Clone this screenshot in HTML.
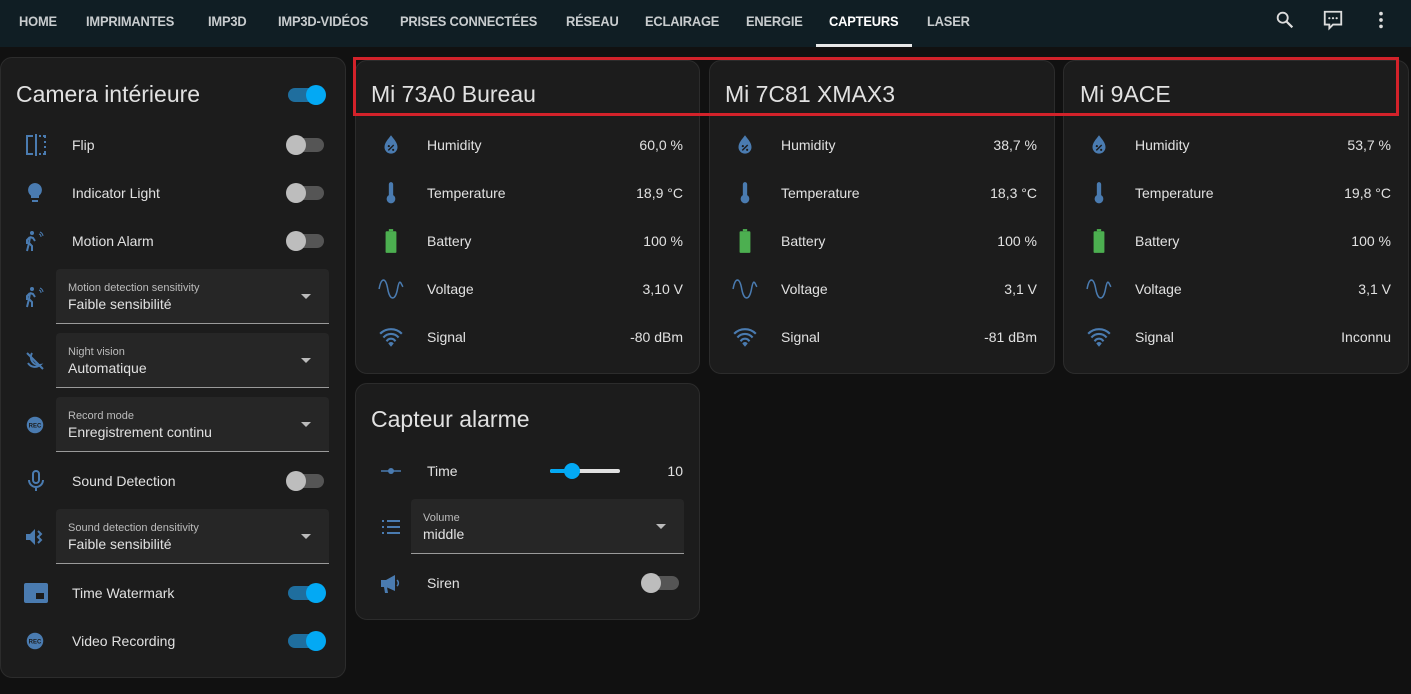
<!DOCTYPE html><html><head><meta charset="utf-8"><style>
*{box-sizing:border-box;margin:0;padding:0}
body{width:1411px;height:694px;background:#111111;font-family:"Liberation Sans",sans-serif;color:#e1e1e1;position:relative;overflow:hidden}
.hdr{position:absolute;left:0;top:0;width:1411px;height:47px;background:#101e24}
.tab{position:absolute;top:13px;font-size:14px;font-weight:bold;color:#c8ccce;letter-spacing:-0.2px;transform:scaleX(0.92);transform-origin:left;white-space:nowrap}
.card{position:absolute;background:#1c1c1c;border:1px solid #2c2c2c;border-radius:12px}
.t{position:absolute;font-size:23px;color:#e1e1e1;top:81px}
.lbl{position:absolute;font-size:14px;color:#e1e1e1}
.val{position:absolute;font-size:14px;color:#e1e1e1;text-align:right}
.ic{position:absolute}
.sw{position:absolute;width:36px;height:14px;border-radius:7px;background:#555}
.sw::after{content:"";position:absolute;top:-3px;left:-2px;width:20px;height:20px;border-radius:50%;background:#bdbdbd}
.sw.on{background:#1f6e9e}
.sw.on::after{left:18px;background:#03a9f4}
.sel{position:absolute;background:#262626;border-bottom:1px solid #9a9a9a;border-radius:4px 4px 0 0}
.sel .s{position:absolute;left:12px;top:13px;font-size:11px;color:#bbb}
.sel .v{position:absolute;left:12px;top:27px;font-size:14px;color:#e1e1e1}
.sel .a{position:absolute;right:18px;top:25px;width:0;height:0;border-left:5px solid transparent;border-right:5px solid transparent;border-top:5px solid #bbb}
</style></head><body>
<div class="hdr">
<span class="tab" style="left:19px">HOME</span>
<span class="tab" style="left:86px">IMPRIMANTES</span>
<span class="tab" style="left:208px">IMP3D</span>
<span class="tab" style="left:278px">IMP3D-VIDÉOS</span>
<span class="tab" style="left:400px">PRISES CONNECTÉES</span>
<span class="tab" style="left:566px">RÉSEAU</span>
<span class="tab" style="left:645px">ECLAIRAGE</span>
<span class="tab" style="left:746px">ENERGIE</span>
<span class="tab" style="left:829px;color:#fff">CAPTEURS</span>
<span class="tab" style="left:927px">LASER</span>
<div style="position:absolute;left:816px;top:44px;width:96px;height:3px;background:#e8e8e8"></div>
<svg class="ic" style="left:1274px;top:9px" width="22" height="22" viewBox="0 0 24 24"><circle cx="9.5" cy="9.5" r="5.5" fill="none" stroke="#ddd" stroke-width="2"/><path d="M13.5 13.5L20 20" stroke="#ddd" stroke-width="2.4"/></svg>
<svg class="ic" style="left:1322px;top:9px" width="22" height="22" viewBox="0 0 24 24"><path d="M3 3h18v14h-9l-4 4v-4H3z" fill="none" stroke="#ddd" stroke-width="2"/><circle cx="8" cy="10" r="1.2" fill="#ddd"/><circle cx="12" cy="10" r="1.2" fill="#ddd"/><circle cx="16" cy="10" r="1.2" fill="#ddd"/></svg>
<svg class="ic" style="left:1370px;top:9px" width="22" height="22" viewBox="0 0 24 24"><circle cx="12" cy="5" r="2" fill="#ddd"/><circle cx="12" cy="12" r="2" fill="#ddd"/><circle cx="12" cy="19" r="2" fill="#ddd"/></svg>
</div>

<div class="card" style="left:0;top:57px;width:346px;height:621px"></div>
<div class="t" style="left:16px">Camera intérieure</div>
<div class="sw on" style="left:288px;top:88px"></div>
<svg class="ic" style="left:24px;top:133px" width="24" height="24" viewBox="0 0 24 24"><path d="M9 3H3v18h6" fill="none" stroke="#4a7bb0" stroke-width="2"/><path d="M12 1v22" stroke="#4a7bb0" stroke-width="2"/><path d="M15 3h2M19 3h2v2M21 8v2M21 13v2M21 18v3h-2M17 21h-2" stroke="#4a7bb0" stroke-width="2"/></svg>
<div class="lbl" style="left:72px;top:137px">Flip</div><div class="sw" style="left:288px;top:138px"></div>
<svg class="ic" style="left:23px;top:181px" width="24" height="24" viewBox="0 0 24 24"><path d="M12 2a7 7 0 0 0-4 12.7V17h8v-2.3A7 7 0 0 0 12 2zM9 19h6v2H9z" fill="#4a7bb0"/></svg>
<div class="lbl" style="left:72px;top:185px">Indicator Light</div><div class="sw" style="left:288px;top:186px"></div>
<svg class="ic" style="left:23px;top:229px" width="24" height="24" viewBox="0 0 24 24"><circle cx="9" cy="4" r="2" fill="#4a7bb0"/><path d="M7 8l-3 3v4M7 8l3 1 2 3M7 8l-1 6 3 3v5M6 14l-2 8" stroke="#4a7bb0" stroke-width="2" fill="none"/><path d="M17 3a5 5 0 0 1 3 4M16 5a3 3 0 0 1 2 3" stroke="#4a7bb0" fill="none"/></svg>
<div class="lbl" style="left:72px;top:233px">Motion Alarm</div><div class="sw" style="left:288px;top:234px"></div>
<svg class="ic" style="left:23px;top:285px" width="24" height="24" viewBox="0 0 24 24"><circle cx="9" cy="4" r="2" fill="#4a7bb0"/><path d="M7 8l-3 3v4M7 8l3 1 2 3M7 8l-1 6 3 3v5M6 14l-2 8" stroke="#4a7bb0" stroke-width="2" fill="none"/><path d="M17 3a5 5 0 0 1 3 4M16 5a3 3 0 0 1 2 3" stroke="#4a7bb0" fill="none"/></svg>
<div class="sel" style="left:56px;top:269px;width:273px;height:55px"><div class="s">Motion detection sensitivity</div><div class="v">Faible sensibilité</div><div class="a"></div></div>
<svg class="ic" style="left:23px;top:349px" width="24" height="24" viewBox="0 0 24 24"><path d="M4 4l16 16" stroke="#4a7bb0" stroke-width="2"/><path d="M9 4a8 8 0 0 0 8 12 8 8 0 0 1-12-2" fill="none" stroke="#4a7bb0" stroke-width="2"/></svg>
<div class="sel" style="left:56px;top:333px;width:273px;height:55px"><div class="s">Night vision</div><div class="v">Automatique</div><div class="a"></div></div>
<svg class="ic" style="left:26px;top:416px" width="18" height="18" viewBox="0 0 24 24"><circle cx="12" cy="12" r="11" fill="#4a7bb0"/><text x="12" y="15" font-size="8" text-anchor="middle" fill="#1c1c1c" font-family="Liberation Sans" font-weight="bold">REC</text></svg>
<div class="sel" style="left:56px;top:397px;width:273px;height:55px"><div class="s">Record mode</div><div class="v">Enregistrement continu</div><div class="a"></div></div>
<svg class="ic" style="left:24px;top:469px" width="24" height="24" viewBox="0 0 24 24"><rect x="9" y="2" width="6" height="12" rx="3" fill="none" stroke="#4a7bb0" stroke-width="2"/><path d="M5 11a7 7 0 0 0 14 0M12 18v4" fill="none" stroke="#4a7bb0" stroke-width="2"/></svg>
<div class="lbl" style="left:72px;top:473px">Sound Detection</div><div class="sw" style="left:288px;top:474px"></div>
<svg class="ic" style="left:23px;top:525px" width="24" height="24" viewBox="0 0 24 24"><path d="M3 9h4l5-5v16l-5-5H3z" fill="#4a7bb0"/><path d="M15 6l3 3-3 3 3 3-3 3" fill="none" stroke="#4a7bb0" stroke-width="2"/></svg>
<div class="sel" style="left:56px;top:509px;width:273px;height:55px"><div class="s">Sound detection densitivity</div><div class="v">Faible sensibilité</div><div class="a"></div></div>
<svg class="ic" style="left:24px;top:583px" width="24" height="20" viewBox="0 0 24 20"><rect x="0" y="0" width="24" height="20" rx="2" fill="#4a7bb0"/><rect x="12" y="10" width="8" height="6" fill="#1c1c1c"/></svg>
<div class="lbl" style="left:72px;top:585px">Time Watermark</div><div class="sw on" style="left:288px;top:586px"></div>
<svg class="ic" style="left:26px;top:632px" width="18" height="18" viewBox="0 0 24 24"><circle cx="12" cy="12" r="11" fill="#4a7bb0"/><text x="12" y="15" font-size="8" text-anchor="middle" fill="#1c1c1c" font-family="Liberation Sans" font-weight="bold">REC</text></svg>
<div class="lbl" style="left:72px;top:633px">Video Recording</div><div class="sw on" style="left:288px;top:634px"></div>

<div class="card" style="left:355px;top:60px;width:345px;height:314px"></div>
<div class="card" style="left:709px;top:60px;width:346px;height:314px"></div>
<div class="card" style="left:1063px;top:60px;width:346px;height:314px"></div>

<div class="t" style="left:371px">Mi 73A0 Bureau</div>
<div class="t" style="left:725px">Mi 7C81 XMAX3</div>
<div class="t" style="left:1080px">Mi 9ACE</div>

<div id="rows"></div>

<div style="position:absolute;left:353px;top:57px;width:1046px;height:59px;border:3px solid #d3222a"></div>

<div class="card" style="left:355px;top:383px;width:345px;height:237px"></div>
<div class="t" style="left:371px;top:406px">Capteur alarme</div>
<svg class="ic" style="left:379px;top:462px" width="24" height="18" viewBox="0 0 24 18"><path d="M2 9h20" stroke="#4a7bb0" stroke-width="1.5"/><circle cx="12" cy="9" r="3" fill="#4a7bb0"/></svg>
<div class="lbl" style="left:427px;top:463px">Time</div>
<div style="position:absolute;left:550px;top:469px;width:70px;height:4px;background:#e0e0e0;border-radius:2px"></div>
<div style="position:absolute;left:550px;top:469px;width:22px;height:4px;background:#03a9f4;border-radius:2px"></div>
<div style="position:absolute;left:564px;top:463px;width:16px;height:16px;background:#03a9f4;border-radius:50%"></div>
<div class="val" style="left:640px;top:463px;width:43px">10</div>
<svg class="ic" style="left:379px;top:516px" width="24" height="24" viewBox="0 0 24 24"><path d="M3 5h2M3 11h2M3 17h2M8 5h13M8 11h13M8 17h13" stroke="#4a7bb0" stroke-width="2"/></svg>
<div class="sel" style="left:411px;top:499px;width:273px;height:55px"><div class="s">Volume</div><div class="v">middle</div><div class="a"></div></div>
<svg class="ic" style="left:379px;top:572px" width="24" height="24" viewBox="0 0 24 24"><path d="M2 8h5l9-5v16l-9-4H2z M5 15h3l1 6H6z" fill="#4a7bb0"/><path d="M18 8a4 4 0 0 1 0 6" stroke="#4a7bb0" stroke-width="1.5" fill="none"/></svg>
<div class="lbl" style="left:427px;top:575px">Siren</div><div class="sw" style="left:643px;top:576px"></div>

<script>
var data=[[355,["60,0 %","18,9 °C","100 %","3,10 V","-80 dBm"]],[709,["38,7 %","18,3 °C","100 %","3,1 V","-81 dBm"]],[1063,["53,7 %","19,8 °C","100 %","3,1 V","Inconnu"]]];
var names=["Humidity","Temperature","Battery","Voltage","Signal"];
var icons=[
'<path d="M12 3C9 7 6 10 6 14a6 6 0 0 0 12 0c0-4-3-7-6-11z" fill="#4a7bb0"/><path d="M9.5 17l5-5" stroke="#1c1c1c" stroke-width="1.3"/><circle cx="10" cy="13" r="1" fill="#1c1c1c"/><circle cx="14" cy="16.5" r="1" fill="#1c1c1c"/>',
'<path d="M10 4a2 2 0 0 1 4 0v10a4 4 0 1 1-4 0z" fill="#4a7bb0"/>',
'<rect x="10" y="1" width="4" height="2" fill="#4caf50"/><rect x="7" y="3" width="10" height="20" rx="1" fill="#4caf50"/>',
'<path d="M1 12c2-11 6-11 8 0s7 11 9 0 3-5 5-2" fill="none" stroke="#4a7bb0" stroke-width="1.4"/>',
'<path d="M2 9a14 14 0 0 1 20 0M5 12.5a9 9 0 0 1 14 0M8 16a4.5 4.5 0 0 1 8 0" fill="none" stroke="#4a7bb0" stroke-width="2"/><path d="M12 21l-2.5-3a3 3 0 0 1 5 0z" fill="#4a7bb0"/>'];
var h="";
data.forEach(function(d){var x=d[0];for(var i=0;i<5;i++){var y=145+48*i;
h+='<svg class="ic" style="left:'+(x+23)+'px;top:'+(y-13)+'px" width="26" height="26" viewBox="0 0 24 24">'+icons[i]+'</svg>';
h+='<div class="lbl" style="left:'+(x+72)+'px;top:'+(y-8)+'px">'+names[i]+'</div>';
h+='<div class="val" style="left:'+(x+200)+'px;top:'+(y-8)+'px;width:128px">'+d[1][i]+'</div>';}});
document.getElementById("rows").innerHTML=h;
</script>
</body></html>
